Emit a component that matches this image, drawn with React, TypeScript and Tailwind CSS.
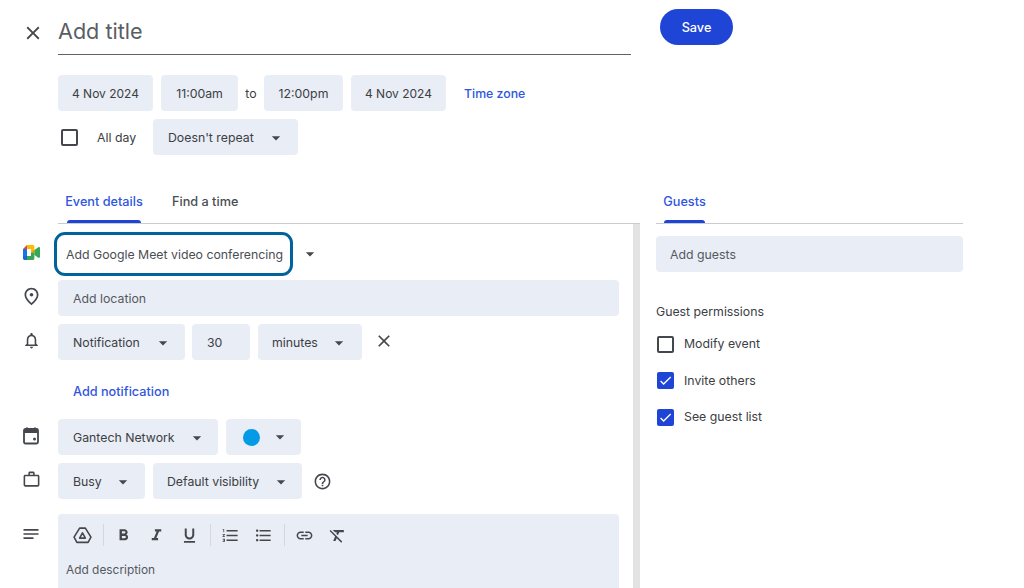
import React from "react";
import {
  MdArrowDropDown,
  MdCheck,
  MdClose,
  MdFormatBold,
  MdFormatClear,
  MdFormatItalic,
  MdFormatListBulleted,
  MdFormatListNumbered,
  MdFormatUnderlined,
  MdHelpOutline,
  MdLink,
  MdNotes,
  MdOutlineNotifications,
  MdOutlinePlace,
  MdOutlineWorkOutline,
} from "react-icons/md";

const chipBase =
  "flex h-9 shrink-0 items-center rounded bg-[#e9edf6] text-[12.300px] text-[#3c4043]";
const chip = chipBase + " pt-[2px]";

const MeetLogo = () => (
  <svg width="17" height="15" viewBox="0 0 17 15">
    <path d="M4 0L0 4h4z" fill="#ea4335" />
    <path d="M0 4h4v7H0z" fill="#1a73e8" />
    <path d="M0 11h4v4H1.400A1.400 1.400 0 0 1 0 13.600z" fill="#1967d2" />
    <path d="M4 0h6a1.400 1.400 0 0 1 1.400 1.400V7.500H8V4H4z" fill="#fbbc04" />
    <path d="M4 15v-4h4V7.500h3.400v6.100A1.400 1.400 0 0 1 10 15z" fill="#34a853" />
    <path d="M11.400 7.500V5L15 2.400c.8-.6 2-.2 2 .8v8.600c0 1-1.200 1.400-2 .8l-3.600-2.600z" fill="#34a853" />
    <path d="M8 7.500l3.400-2.500v2.500z" fill="#ea8600" />
  </svg>
);

const CalendarIcon = () => (
  <svg width="20" height="20" viewBox="0 0 20 20" fill="none">
    <path d="M5 1.500h2v2H5zM13 1.500h2v2h-2z" fill="#44474b" />
    <rect x="3" y="3" width="14" height="14.500" rx="1.500" stroke="#44474b" strokeWidth="1.800" />
    <path d="M3 3h14v4H3z" fill="#44474b" />
    <rect x="12" y="11.500" width="3" height="3" rx="1.500" fill="#44474b" />
  </svg>
);

const DriveIcon = () => (
  <svg width="19" height="19" viewBox="0 0 18 18" fill="none" stroke="#44474b" strokeWidth="1.500" strokeLinejoin="round">
    <path d="M6.300 2h5.400L17 10.600l-2.700 4.900H3.700L1 10.600z" />
    <path d="M9 6.500l2.700 5H6.300z" />
  </svg>
);

const Checkbox = ({ checked }: { checked?: boolean }) =>
  checked ? (
    <span className="flex h-[17px] w-[17px] shrink-0 items-center justify-center rounded-[2px] bg-[#1f45d6] text-white">
      <MdCheck size={15} />
    </span>
  ) : (
    <span className="block h-[17px] w-[17px] shrink-0 rounded-[2px] border-2 border-[#44474b]" />
  );

const Caret = ({ className = "" }: { className?: string }) => (
  <MdArrowDropDown size={20} className={"shrink-0 text-[#44474b] " + className} />
);

const Divider = ({ className = "ml-[4px] mr-[3px]" }: { className?: string }) => (
  <span className={"h-[22px] w-px bg-[#d4d7de] " + className} />
);

const ToolButton = ({ children }: { children: React.ReactNode }) => (
  <span className="flex w-[33px] justify-center text-[#44474b]">{children}</span>
);

function Row({ icon, children, className = "" }: { icon: React.ReactNode; children: React.ReactNode; className?: string }) {
  return (
    <div className={"flex " + className}>
      <div className="flex h-9 w-[58px] shrink-0 items-center justify-center pb-[3px] pl-[4px] text-[#44474b]">
        {icon}
      </div>
      {children}
    </div>
  );
}

export default function App() {
  return (
    <div
      className="flex h-[588px] w-[1024px] overflow-hidden bg-white text-[#3c4043]"
      style={{ fontFamily: "Inter, 'Noto Sans', sans-serif" }}
    >
      <div className="flex w-[640px] shrink-0 flex-col">
        {/* header */}
        <div className="flex pt-[8px]">
          <div className="flex h-[47px] w-[58px] shrink-0 items-center justify-center pl-[10px] pr-[2px] pt-[2px] text-[#44474b]">
            <MdClose size={22} />
          </div>
          <div className="flex h-[47px] w-[573px] items-center border-b border-[#5f6368] pt-[1px] text-[21.600px] text-[#5a5e63]">
            Add title
          </div>
        </div>

        <div className="ml-[58px] mt-[20px] flex items-center text-[12.300px]">
          <div className={chip + " w-[95px] justify-center text-[12px]"}>4 Nov 2024</div>
          <div className={chip + " ml-[8px] w-[77px] justify-center"}>11:00am</div>
          <span className="w-[26px] pt-[3px] text-center">to</span>
          <div className={chip + " w-[79px] justify-center"}>12:00pm</div>
          <div className={chip + " ml-[8px] w-[95px] justify-center text-[12px]"}>4 Nov 2024</div>
          <span className="ml-[18px] pt-[3px] font-medium text-[#2f56e0]">Time zone</span>
        </div>

        <div className="ml-[58px] mt-[8px] flex items-center text-[12.300px]">
          <span className="ml-[3px]">
            <Checkbox />
          </span>
          <span className="ml-[19px] w-[56px] pt-[2px]">All day</span>
          <div className={chip + " w-[145px] pl-[15px]"}>
            Doesn't repeat
            <Caret className="ml-[12px]" />
          </div>
        </div>

        {/* tabs */}
        <div className="ml-[58px] mt-[32px] flex h-[37px] items-start border-b border-[#c9cbcf] text-[12.700px] font-medium">
          <div className="ml-[9px] flex h-[36px] w-[74px] flex-col items-center justify-between whitespace-nowrap pt-[5px] text-[#2f56e0]">
            Event details
            <span className="h-[3px] w-full rounded-t bg-[#1f45d6]" />
          </div>
          <div className="ml-[31px] pt-[5px] text-[#4a4e52]">Find a time</div>
        </div>

        {/* details */}
        <div className="flex min-h-0 flex-1">
          <div className="min-w-0 flex-1 pt-[8px]">
            <div className="flex items-center">
              <div className="flex w-[54px] shrink-0 justify-center pb-[3px] pl-[8px]">
                <MeetLogo />
              </div>
              <div className="flex h-[44px] w-[239px] items-center whitespace-nowrap rounded-[11px] border-[3px] border-[#00639b] pl-[9px] pt-[2px] text-[12.300px] text-[#4a4e52]">
                Add Google Meet video conferencing
              </div>
              <Caret className="ml-[7px]" />
            </div>

            <Row icon={<MdOutlinePlace size={21} />} className="mt-[4px]">
              <div className={chip + " w-[561px] pl-[15px] text-[#55595e]"}>Add location</div>
            </Row>

            <Row icon={<MdOutlineNotifications size={19} />} className="mt-[8px]">
              <div className={chip + " w-[127px] pl-[15px]"}>
                Notification
                <Caret className="ml-[13px]" />
              </div>
              <div className={chip + " ml-[7px] w-[58px] pl-[15px]"}>30</div>
              <div className={chip + " ml-[8px] w-[104px] pl-[14px]"}>
                minutes
                <Caret className="ml-[11px]" />
              </div>
              <span className="ml-[12px] flex h-9 items-center pb-[2px] text-[#44474b]">
                <MdClose size={20} />
              </span>
            </Row>

            <div className="ml-[73px] mt-[23px] text-[12.700px] font-medium leading-[18px] text-[#2f56e0]">
              Add notification
            </div>

            <Row icon={<CalendarIcon />} className="mt-[18px]">
              <div className={chip + " w-[160px] pl-[15px]"}>
                Gantech Network
                <Caret className="ml-[12px]" />
              </div>
              <div className={chipBase + " ml-[8px] w-[75px] pl-[17px]"}>
                <span className="h-[17px] w-[17px] rounded-full bg-[#039be5]" />
                <Caret className="ml-[10px]" />
              </div>
            </Row>

            <Row icon={<MdOutlineWorkOutline size={19} />} className="mt-[8px]">
              <div className={chip + " w-[87px] pl-[15px]"}>
                Busy
                <Caret className="ml-[11px]" />
              </div>
              <div className={chip + " ml-[8px] w-[149px] pl-[14px]"}>
                Default visibility
                <Caret className="ml-[12px]" />
              </div>
              <span className="ml-[11px] flex h-9 items-center text-[#44474b]">
                <MdHelpOutline size={19} />
              </span>
            </Row>

            <div className="mt-[15px] flex">
              <div className="flex h-[40px] w-[58px] shrink-0 items-center justify-center pl-[4px] text-[#44474b]">
                <MdNotes size={20} />
              </div>
              <div className="h-[74px] w-[561px] rounded-t bg-[#e9edf6] pl-[8px]">
                <div className="flex h-[42px] items-center">
                  <span className="ml-[7px] flex w-[19px] justify-center">
                    <DriveIcon />
                  </span>
                  <Divider className="ml-[11px] mr-[3px]" />
                  <ToolButton><MdFormatBold size={19} /></ToolButton>
                  <ToolButton><MdFormatItalic size={19} /></ToolButton>
                  <ToolButton><MdFormatUnderlined size={19} /></ToolButton>
                  <Divider />
                  <ToolButton><MdFormatListNumbered size={19} /></ToolButton>
                  <ToolButton><MdFormatListBulleted size={19} /></ToolButton>
                  <Divider />
                  <ToolButton><MdLink size={19} /></ToolButton>
                  <ToolButton><MdFormatClear size={19} /></ToolButton>
                </div>
                <div className="mt-[5px] text-[11.900px] leading-[18px] text-[#55595e]">Add description</div>
              </div>
            </div>
          </div>
          <div className="w-[7px] shrink-0 bg-[#e3e3e3]" />
        </div>
      </div>

      {/* guests column */}
      <div className="ml-[16px] flex w-[307px] shrink-0 flex-col">
        <div className="ml-[4px] mt-[9px] flex h-[36px] w-[73px] items-center justify-center rounded-full bg-[#1f45d6] pt-[2px] text-[12.700px] font-medium text-white">
          Save
        </div>
        <div className="mt-[142px] flex h-[37px] items-start border-b border-[#c9cbcf] text-[12.700px] font-medium text-[#2f56e0]">
          <div className="ml-[8px] flex h-[36px] w-[41px] flex-col items-center justify-between pt-[5px]">
            Guests
            <span className="h-[3px] w-full rounded-t bg-[#1f45d6]" />
          </div>
        </div>
        <div className={chip + " mt-[12px] pl-[14px] text-[#55595e]"}>Add guests</div>
        <div className="mt-[31px] text-[12.300px] leading-[18px]">Guest permissions</div>
        <div className="mt-[14px] flex flex-col gap-[18.500px] pl-[1px] text-[12.300px] leading-[18px]">
          <div className="flex items-center gap-[10px]">
            <Checkbox />
            Modify event
          </div>
          <div className="flex items-center gap-[10px]">
            <Checkbox checked />
            Invite others
          </div>
          <div className="flex items-center gap-[10px]">
            <Checkbox checked />
            See guest list
          </div>
        </div>
      </div>
    </div>
  );
}
